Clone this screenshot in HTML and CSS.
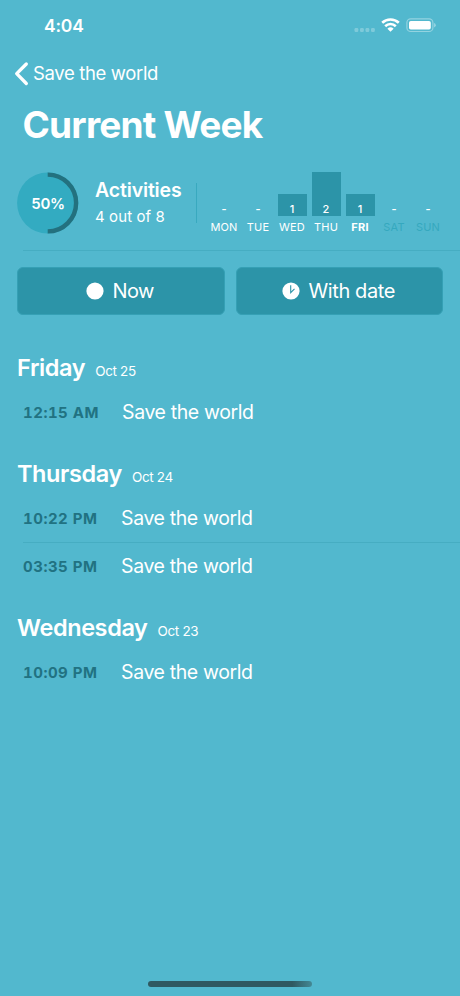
FILE: index.html
```html
<!DOCTYPE html>
<html lang="en">
<head>
<meta charset="utf-8">
<title>Current Week</title>
<link rel="stylesheet" href="styles.css">
</head>
<body>
<div class="screen">
  <header class="status">
    <span class="clock">4:04</span>
    <svg class="status-icons" width="84" height="20" viewBox="0 0 84 20">
      <g fill="#fff" fill-opacity=".26"><rect x="0.5" y="14" width="3.8" height="4" rx="1.2"/><rect x="6" y="14" width="3.8" height="4" rx="1.2"/><rect x="11.5" y="14" width="3.8" height="4" rx="1.2"/><rect x="17" y="14" width="3.8" height="4" rx="1.2"/></g>
      <g fill="none" stroke="#fff" stroke-width="2.6"><path d="M28.2 8.8a12 12 0 0 1 16.6 0"/><path d="M31.2 12.2a7.6 7.6 0 0 1 10.6 0"/></g>
      <path fill="#fff" d="M33.4 14.8a4.5 4.5 0 0 1 6.2 0L36.5 17.8z"/>
      <rect x="52.9" y="4.9" width="26" height="12.6" rx="3.8" fill="none" stroke="#fff" stroke-opacity=".38" stroke-width="1.2"/>
      <rect x="55" y="7" width="21.8" height="8.6" rx="1.8" fill="#fff"/>
      <path d="M80.2 9v4.4q1.5-.6 1.5-2.2t-1.5-2.2z" fill="#fff" fill-opacity=".45"/>
    </svg>
  </header>
  <nav class="back">
    <svg width="16" height="26" viewBox="0 0 16 26"><path d="M12.3 3 2.7 12.7l9.6 9.8" fill="none" stroke="#fff" stroke-width="3.3" stroke-linecap="round" stroke-linejoin="round"/></svg>
    <span>Save the world</span>
  </nav>
  <h1>Current Week</h1>
  <section class="summary">
    <div class="ring">
      <svg width="62" height="62" viewBox="0 0 62 62"><circle cx="30.7" cy="31" r="30.6" fill="#33abc1"/><path d="M30.7 2.6a28.4 28.4 0 0 1 0 56.8" fill="none" stroke="#23717f" stroke-width="4.4"/></svg>
      <span>50%</span>
    </div>
    <div class="totals"><h2>Activities</h2><p>4 out of 8</p></div>
    <div class="chart">
      <div class="day"><div class="bar none"><span>-</span></div><label>MON</label></div>
      <div class="day"><div class="bar none"><span>-</span></div><label>TUE</label></div>
      <div class="day"><div class="bar one"><span>1</span></div><label>WED</label></div>
      <div class="day"><div class="bar two"><span>2</span></div><label>THU</label></div>
      <div class="day today"><div class="bar one"><span>1</span></div><label>FRI</label></div>
      <div class="day future"><div class="bar none"><span>-</span></div><label>SAT</label></div>
      <div class="day future"><div class="bar none"><span>-</span></div><label>SUN</label></div>
    </div>
  </section>
  <div class="actions">
    <button><svg width="18" height="18" viewBox="0 0 18 18"><circle cx="9" cy="9" r="8.6" fill="#fff"/></svg><span class="now">Now</span></button>
    <button><svg width="18" height="18" viewBox="0 0 18 18"><circle cx="9" cy="9" r="8.6" fill="#fff"/><path d="M8.7 3.2v7.4L12.5 6.9" fill="none" stroke="#2c94a8" stroke-width="1.1"/></svg><span class="date-label">With date</span></button>
  </div>
  <main>
    <section class="group">
      <h3><span>Friday</span><small>Oct 25</small></h3>
      <div class="row late"><time>12:15 AM</time><span>Save the world</span></div>
    </section>
    <section class="group">
      <h3><span>Thursday</span><small>Oct 24</small></h3>
      <div class="row"><time>10:22 PM</time><span>Save the world</span></div>
      <div class="row"><time>03:35 PM</time><span>Save the world</span></div>
    </section>
    <section class="group">
      <h3><span>Wednesday</span><small>Oct 23</small></h3>
      <div class="row"><time>10:09 PM</time><span>Save the world</span></div>
    </section>
  </main>
  <div class="home"></div>
</div>
</body>
</html>
```
FILE: styles.css
```css
* { box-sizing: border-box; margin: 0; padding: 0; }
body { background: #52b8ce; }
.screen {
  width: 460px; height: 996px; overflow: hidden;
  display: flex; flex-direction: column;
  font-family: Inter, "Liberation Sans", sans-serif; color: #fff;
  white-space: nowrap;
}
.status { height: 50px; display: flex; justify-content: space-between; padding: 14px 22px 0 44px; }
.clock { font-size: 17.5px; font-weight: 600; line-height: 24px; letter-spacing: -.2px; }
.back { height: 48px; display: flex; align-items: center; padding-left: 14px; gap: 3px; font-size: 18.5px; letter-spacing: -.35px; }
.back span { margin-top: -2px; }
h1 { height: 54px; line-height: 54px; padding-left: 22.5px; font-size: 37px; font-weight: 700; letter-spacing: -.78px; }
.summary { height: 99px; margin-left: 17px; display: flex; padding-top: 20px; background: linear-gradient(#46adc2, #46adc2) 6px 98px / 100% 1px no-repeat; }
.ring { display: grid; width: 62px; height: 62px; place-items: center; }
.ring > * { grid-area: 1 / 1; }
.ring span { font-size: 15px; font-weight: 600; letter-spacing: -.3px; }
.totals { width: 101px; height: 40px; margin: 11px 0 0 17px; border-right: 1px solid #39a9bf; }
.totals h2 { font-size: 19.5px; font-weight: 600; line-height: 24px; margin: -5px 0 0 -1px; letter-spacing: -.15px; }
.totals p { font-size: 15px; line-height: 20px; margin: 5px 0 0 -1px; letter-spacing: .1px; }
.chart { display: flex; margin-left: 10px; height: 62px; align-items: flex-end; }
.day { width: 34px; display: flex; flex-direction: column; align-items: center; }
.day label { font-size: 11px; line-height: 14px; margin-top: 4px; letter-spacing: .2px; }
.bar { width: 29px; display: flex; align-items: flex-end; justify-content: center; font-size: 11px; line-height: 14px; font-weight: 500; }
.none { font-weight: 600; }
.one { height: 22px; background: #2c94a8; }
.two { height: 44px; background: #2c94a8; }
.today label { font-weight: 700; }
.future label { color: #35a8be; }
.actions { display: flex; gap: 11px; padding: 16px 17px 0; }
button { width: 207.5px; height: 47.5px; border: 1px solid #35a0b5; border-radius: 6px; background: #2c94a8; color: #fff; font: 20px Inter, "Liberation Sans", sans-serif; display: flex; align-items: center; justify-content: center; gap: 9px; padding-right: 2px; }
.now { letter-spacing: -.6px; }
.date-label { letter-spacing: -.4px; }
button svg { flex: none; }
main { padding-top: 38.5px; }
.group { padding-bottom: 22px; }
h3 { height: 35px; margin-bottom: 1px; padding-left: 17px; display: flex; align-items: baseline; gap: 10px; font-size: 23.5px; line-height: 30px; font-weight: 600; letter-spacing: -.4px; }
small { font-size: 13.5px; font-weight: 400; letter-spacing: -.35px; }
.row { height: 48px; margin-left: 23px; padding-bottom: 2px; display: flex; align-items: center; }
.row + .row { margin-top: -1px; height: 49px; padding-bottom: 2px; border-top: 1px solid #46adc2; }
.row time { width: 98px; font-size: 15px; font-weight: 700; color: #217282; letter-spacing: .5px; font-variant-numeric: tabular-nums; }
.row.late time { width: 99px; }
.row span { font-size: 19.5px; letter-spacing: -.38px; }
.home { width: 164px; height: 6px; border-radius: 3px; margin: auto 0 9px 148px; background: linear-gradient(90deg, #2f5961 88%, #438995); }
```
